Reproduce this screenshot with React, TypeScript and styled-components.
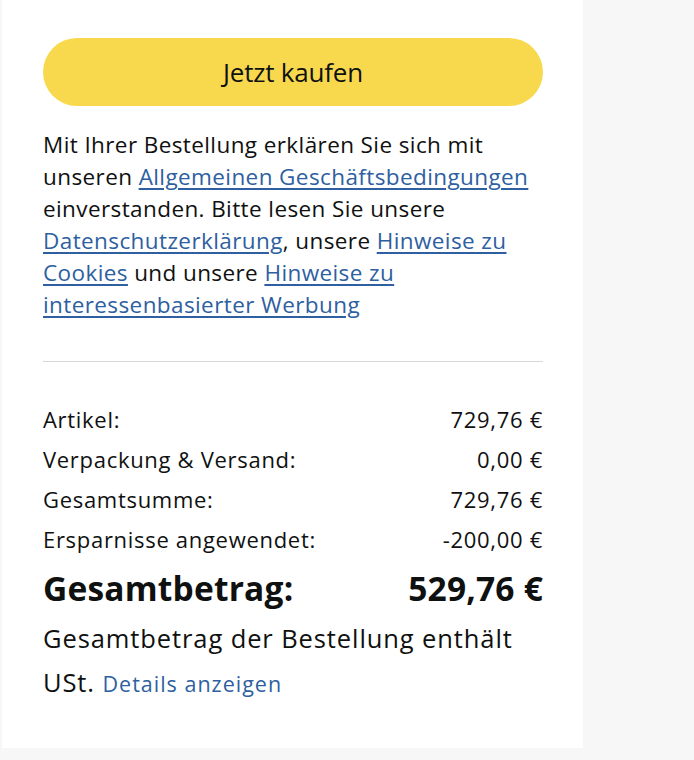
import styled, { createGlobalStyle } from "styled-components";

const GlobalStyle = createGlobalStyle`
  body {
    margin: 0;
    background: #f7f7f7;
    font-family: "Open Sans", "Liberation Sans", Arial, sans-serif;
    color: #0f1111;
  }
`;

const Panel = styled.div`
  width: 581px;
  min-height: 748px;
  margin-left: 2px;
  box-sizing: border-box;
  padding: 38px 40px 0 41px;
  background: #ffffff;
`;

const BuyButton = styled.button`
  display: block;
  width: 500px;
  height: 68px;
  border: none;
  border-radius: 34px;
  background: #f8d94e;
  color: #0f1111;
  font-family: inherit;
  font-size: 26px;
  letter-spacing: -0.2px;
  cursor: pointer;
`;

const Legal = styled.p`
  margin: 23px 0 0;
  font-size: 22.5px;
  letter-spacing: 0.4px;
  line-height: 32px;
  white-space: nowrap;
`;

const TextLink = styled.a`
  color: #2e5fa0;
  text-decoration: underline;
  text-underline-offset: 3px;
  text-decoration-thickness: 1.5px;
`;

const Divider = styled.hr`
  margin: 40px 0 37px;
  border: none;
  border-top: 1px solid #d5d9d9;
`;

const Summary = styled.div`
  display: flex;
  flex-direction: column;
`;

const Row = styled.div<{ $total?: boolean }>`
  display: flex;
  justify-content: space-between;
  align-items: center;
  height: ${(p) => (p.$total ? "58px" : "40px")};
  font-size: ${(p) => (p.$total ? "33.5px" : "22px")};
  font-weight: ${(p) => (p.$total ? 700 : 400)};
  letter-spacing: ${(p) => (p.$total ? "0.2px" : "0.7px")};
`;

const TaxNote = styled.p`
  margin: -1px 0 0;
  font-size: 25.5px;
  letter-spacing: 0.9px;
  line-height: 44px;
  white-space: nowrap;
`;

const PlainLink = styled.a`
  color: #2e5fa0;
  text-decoration: none;
  font-size: 21.5px;
  letter-spacing: 1px;
`;

const rows = [
  ["Artikel:", "729,76 €"],
  ["Verpackung & Versand:", "0,00 €"],
  ["Gesamtsumme:", "729,76 €"],
  ["Ersparnisse angewendet:", "-200,00 €"],
];

export default function App() {
  return (
    <>
      <GlobalStyle />
      <Panel>
        <BuyButton>Jetzt kaufen</BuyButton>
        <Legal>
          Mit Ihrer Bestellung erklären Sie sich mit
          <br />
          unseren <TextLink href="#">Allgemeinen Geschäftsbedingungen</TextLink>
          <br />
          einverstanden. Bitte lesen Sie unsere
          <br />
          <TextLink href="#">Datenschutzerklärung</TextLink>, unsere{" "}
          <TextLink href="#">
            Hinweise zu
            <br />
            Cookies
          </TextLink>{" "}
          und unsere{" "}
          <TextLink href="#">
            Hinweise zu
            <br />
            interessenbasierter Werbung
          </TextLink>
        </Legal>
        <Divider />
        <Summary>
          {rows.map(([label, value]) => (
            <Row key={label}>
              <span>{label}</span>
              <span>{value}</span>
            </Row>
          ))}
          <Row $total>
            <span>Gesamtbetrag:</span>
            <span>529,76 €</span>
          </Row>
        </Summary>
        <TaxNote>
          Gesamtbetrag der Bestellung enthält
          <br />
          USt. <PlainLink href="#">Details anzeigen</PlainLink>
        </TaxNote>
      </Panel>
    </>
  );
}
